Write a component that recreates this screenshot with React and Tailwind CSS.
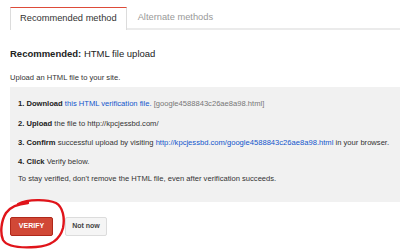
const Ring = () => (
  <svg
    className="absolute left-0 top-[197px] pointer-events-none"
    width="70"
    height="53"
    viewBox="0 0 70 53"
  >
    <path
      d="M18 7 C28 2 47 2 56 6 C63 10 65 21 63 31 C60 42 51 49 36 50 C22 51 7 50 3 43 C0 36 1 24 6 16 C10 10 17 7 28 6"
      fill="none"
      stroke="#e0141a"
      strokeWidth="2.4"
      strokeLinecap="round"
    />
  </svg>
);

const App = () => {
  return (
    <div className="relative w-[400px] h-[250px] bg-white overflow-hidden font-['Liberation_Sans',Arial,sans-serif] text-[#222]">
      <div className="flex items-end pt-[7px] pl-[10px]">
        <div className="h-[23px] px-[9px] flex items-center border-t border-t-[#dd4b39] border-x border-x-[#dcdcdc] bg-white text-[9.3px] text-[#333]">
          Recommended method
        </div>
        <div className="h-[22px] pl-[11px] pr-[6px] flex items-center border-b-2 border-b-[#ebebeb] text-[9.3px] text-[#999]">
          Alternate methods
        </div>
        <div className="flex-1 h-[22px] border-b-2 border-b-[#ebebeb]"></div>
      </div>

      <div className="pl-[10px]">
        <div className="mt-[18px] text-[9.5px] leading-[12px] text-[#222]">
          <span className="font-bold">Recommended:</span> HTML file upload
        </div>
        <div className="mt-[13px] text-[7.6px] leading-[10px] text-[#333]">
          Upload an HTML file to your site.
        </div>

        <div className="mt-[4px] h-[115px] bg-[#f1f1f1] pl-[8px] pt-[12px] text-[7.6px] leading-[10px] text-[#333] flex flex-col">
          <div>
            <span className="font-bold text-[#222]">1. Download</span>{" "}
            <span className="text-[#1155cc]">this HTML verification file.</span>{" "}
            <span className="text-[#777]">[google4588843c26ae8a98.html]</span>
          </div>
          <div className="mt-[10px]">
            <span className="font-bold text-[#222]">2. Upload</span> the file to
            http://kpcjessbd.com/
          </div>
          <div className="mt-[9px]">
            <span className="font-bold text-[#222]">3. Confirm</span> successful
            upload by visiting{" "}
            <span className="text-[#1155cc]">
              http://kpcjessbd.com/google4588843c26ae8a98.html
            </span>{" "}
            in your browser.
          </div>
          <div className="mt-[9px]">
            <span className="font-bold text-[#222]">4. Click</span> Verify below.
          </div>
          <div className="mt-[7px]">
            To stay verified, don't remove the HTML file, even after verification
            succeeds.
          </div>
        </div>

        <div className="mt-[15px] flex gap-[12px]">
          <button className="w-[43px] h-[19px] bg-[#d14836] border border-[#b0281a] rounded-[2px] text-white text-[7px] font-bold">
            VERIFY
          </button>
          <button className="w-[42px] h-[19px] bg-[#f5f5f5] border border-[#dcdcdc] rounded-[2px] text-[#444] text-[7px] font-bold">
            Not now
          </button>
        </div>
      </div>

      <Ring />
    </div>
  );
};

export default App;
